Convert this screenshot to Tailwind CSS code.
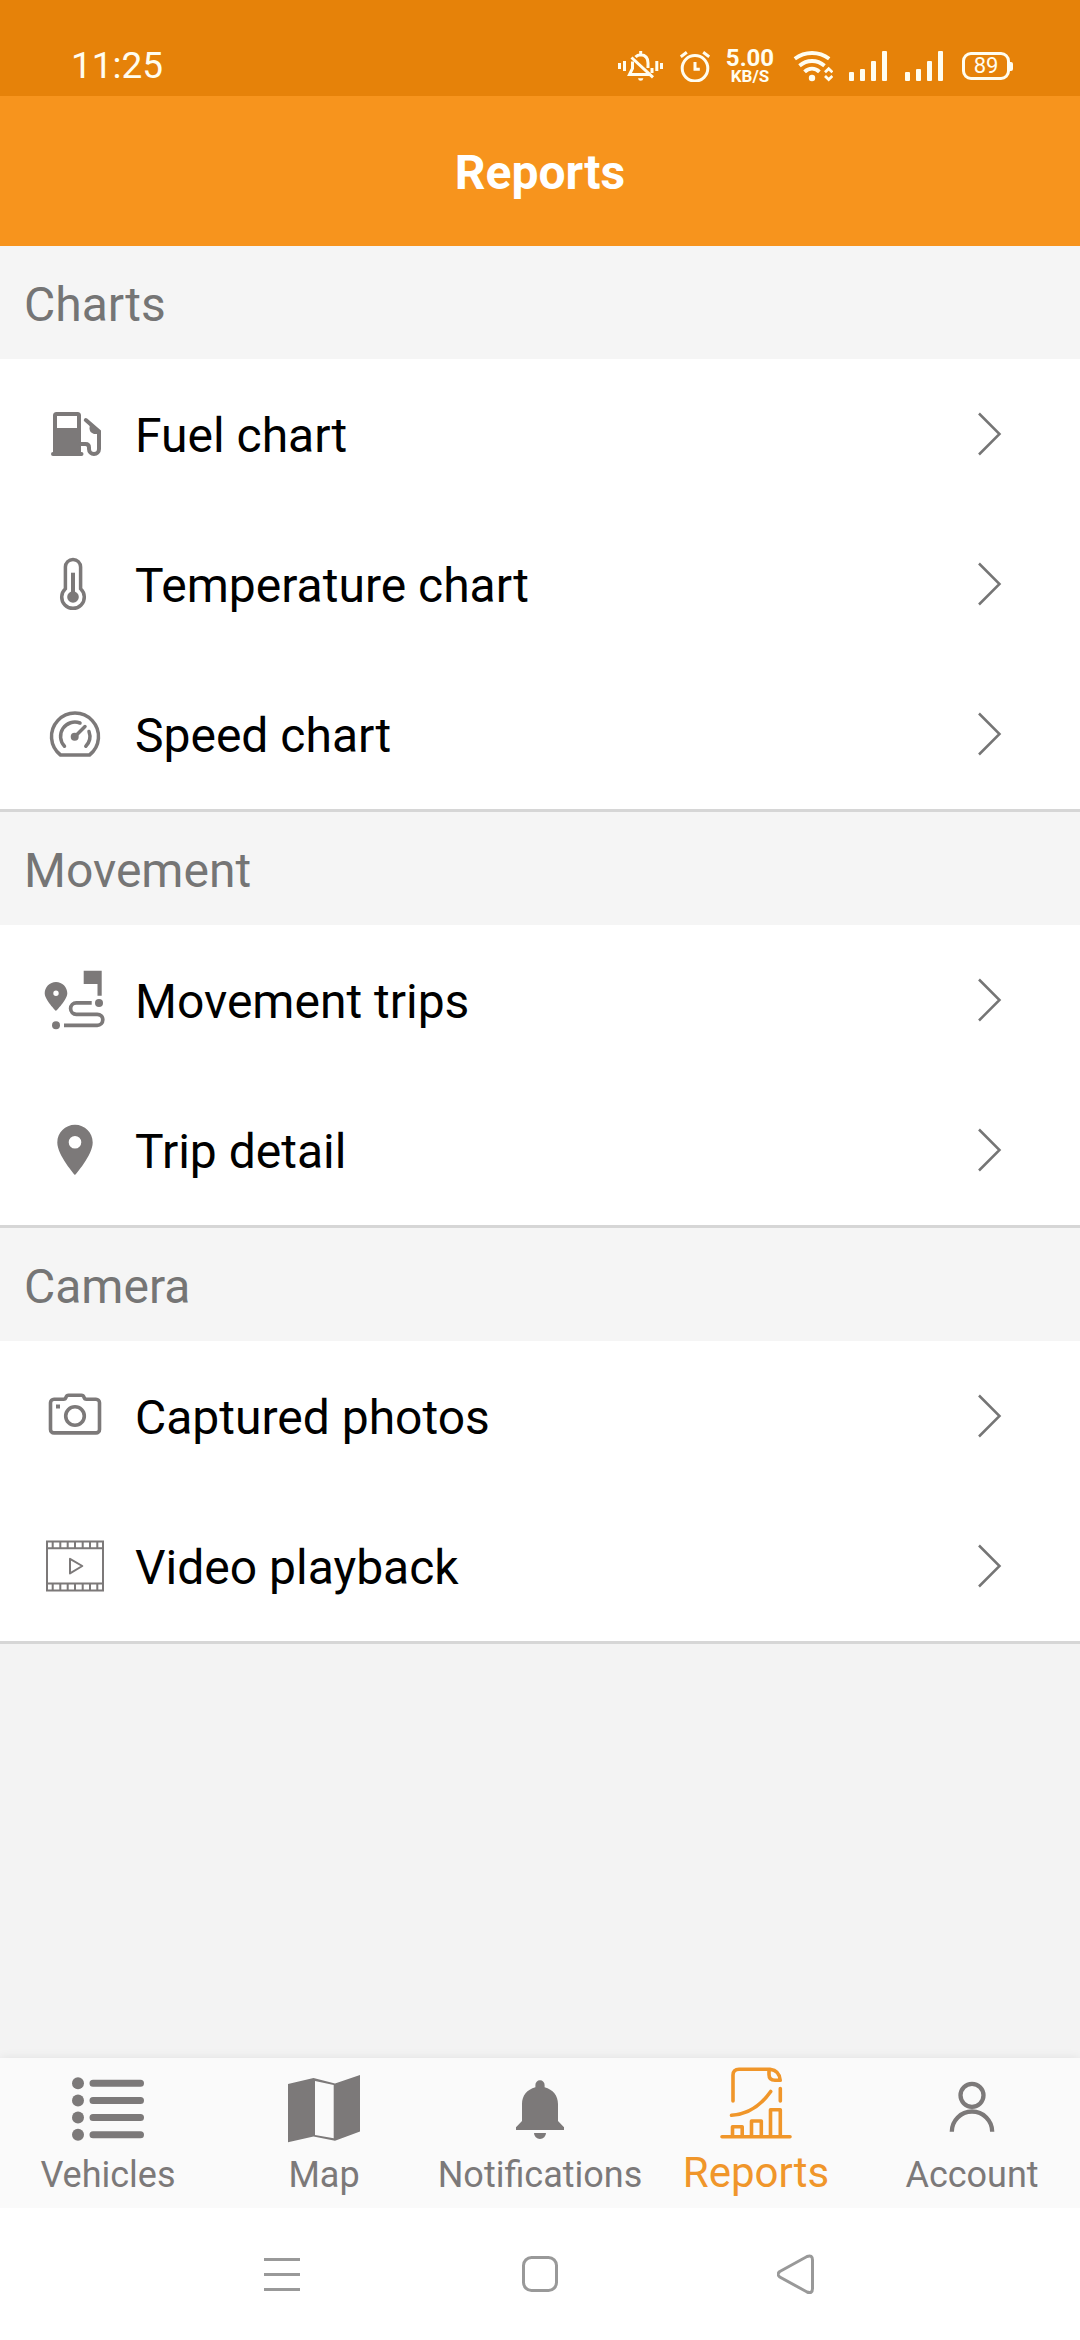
<!DOCTYPE html>
<html lang="en">
<head>
<meta charset="utf-8">
<meta name="viewport" content="width=device-width, initial-scale=1">
<title>Reports</title>
<script src="https://cdn.jsdelivr.net/npm/@tailwindcss/browser@4"></script>
</head>
<body class="flex min-h-screen flex-col bg-[#f3f3f3] font-[Roboto,sans-serif] text-black">

<!-- Status bar -->
<div class="flex h-24 shrink-0 items-center justify-between bg-[#e68209] pt-9 pr-[67px] pl-[71px] text-[#fffdf0]">
  <span class="text-[37px] leading-[48px]">11:25</span>
  <div class="flex items-center gap-4">
    <svg class="h-8 w-[46px]" viewBox="0 0 46 32" fill="none" stroke="currentColor" stroke-width="3" aria-label="Vibrate">
      <path d="M1.5 13v6M6.5 11v10M38.800 11v10M43.500 13v6"/>
      <path d="M13.500 7.500 35 27.300"/>
      <path d="M14.500 11.500v7l-3 6h20M17.500 7q2-2.300 5.200-2.300 7.300.500 7.300 8.300v5M22.700 1v4M34 18v5" />
      <path d="M20 28.300h5.400q-.400 2.500-2.700 2.500t-2.700-2.500z" fill="currentColor" stroke="none"/>
    </svg>
    <svg class="h-8 w-[30px]" viewBox="0 0 30 32" fill="none" stroke="currentColor" stroke-width="3" aria-label="Alarm">
      <circle cx="15" cy="18.300" r="12.800"/>
      <path d="M15 12v7.200h4.800M.800 6.800 6.800 2.300M29.200 6.800 23.200 2.300"/>
    </svg>
    <span class="flex w-12 flex-col items-center font-bold">
      <span class="text-2xl leading-5">5.00</span>
      <span class="text-[17px] leading-4">KB/S</span>
    </span>
    <svg class="h-8 w-[43px]" viewBox="0 0 43 32" fill="none" stroke="currentColor" stroke-width="3.800" aria-label="Wi-Fi">
      <path d="M4.800 8.800Q12.500 3 22 3t17.200 5.800M9.500 15.800Q15 11 22 11t12.500 4.800M14.600 21.800q3.200-3.200 7.400-3.200t7.400 3.200"/>
      <circle cx="22" cy="28" r="3.200" fill="currentColor" stroke="none"/>
      <path d="M35 22.300l3.700-3.500 3.700 3.500M35 26l3.700 3.500L42.400 26" stroke-width="2.800"/>
    </svg>
    <svg class="h-8 w-[38px]" viewBox="0 0 38 32" fill="currentColor" aria-label="Signal SIM 1">
      <rect y="22" width="5" height="9" rx="1"/><rect x="11" y="19" width="5" height="12" rx="1"/><rect x="22" y="11" width="5" height="20" rx="1"/><rect x="33" y="1" width="5" height="30" rx="1"/>
    </svg>
    <svg class="h-8 w-10" viewBox="-2 0 40 32" fill="currentColor" aria-label="Signal SIM 2">
      <rect y="22" width="5" height="9" rx="1"/><rect x="11" y="19" width="5" height="12" rx="1"/><rect x="22" y="11" width="5" height="20" rx="1"/><rect x="33" y="1" width="5" height="30" rx="1"/>
    </svg>
    <div class="flex items-center pl-[3px]">
      <span class="flex h-7 w-12 items-center justify-center rounded-[9px] border-3 border-current text-[22px] leading-none">89</span>
      <span class="h-[9px] w-[3px] rounded-r-[2px] bg-current"></span>
    </div>
  </div>
</div>

<header class="flex h-[150px] shrink-0 items-center justify-center bg-[#f7941d] pt-[3px]">
  <h1 class="text-5xl font-bold text-white">Reports</h1>
</header>

<main class="flex-1">
  <section class="border-b-3 border-[#d6d6d6] bg-white">
    <h2 class="flex h-[113px] items-center bg-[#f5f5f5] px-6 pt-1 text-5xl text-[#757575]">Charts</h2>
    <a href="#fuel" class="flex h-[150px] items-center gap-[30px] pr-[78px] pl-[45px]">
      <svg class="size-[60px] shrink-0 overflow-visible text-[#7c7979]" viewBox="0 0 60 60" fill="currentColor">
        <path fill-rule="evenodd" d="M11.500 8h21A3.500 3.500 0 0 1 36 11.500V48h.500a2 2 0 0 1 0 4H8a2 2 0 0 1 0-4V11.500A3.500 3.500 0 0 1 11.500 8zM12 12v12h20V12z"/>
        <path d="M35 40h5.500q3.500 0 3.500 3.500V45a5 5 0 0 0 10 0V27.500L40.800 16" fill="none" stroke="currentColor" stroke-width="4" stroke-linecap="round"/>
        <path d="M45 19l10 8v3h-6q-4.500-1.500-4.500-5.500z"/>
      </svg>
      <span class="flex-1 pt-[3px] text-5xl">Fuel chart</span>
      <svg class="h-11 w-6 shrink-0 text-[#757575]" viewBox="0 0 24 44" fill="none" stroke="currentColor" stroke-width="2.500"><path d="M1 1.500 21.500 22 1 42.500"/></svg>
    </a>
    <a href="#temperature" class="flex h-[150px] items-center gap-[30px] pr-[78px] pl-[45px]">
      <svg class="size-[60px] shrink-0 text-[#7c7979]" viewBox="0 0 60 60" fill="none" stroke="currentColor" stroke-width="3.500">
        <path d="M20.400 34.700V13a7.600 7.600 0 0 1 15.200 0V34.700A11.300 11.300 0 1 1 20.400 34.700z"/>
        <path d="M28 18.700V43" stroke-width="4"/>
        <circle cx="28" cy="43" r="5.800" fill="currentColor" stroke="none"/>
      </svg>
      <span class="flex-1 pt-[3px] text-5xl">Temperature chart</span>
      <svg class="h-11 w-6 shrink-0 text-[#757575]" viewBox="0 0 24 44" fill="none" stroke="currentColor" stroke-width="2.500"><path d="M1 1.500 21.500 22 1 42.500"/></svg>
    </a>
    <a href="#speed" class="flex h-[150px] items-center gap-[30px] pr-[78px] pl-[45px]">
      <svg class="size-[60px] shrink-0 text-[#7c7979]" viewBox="0 0 60 60" fill="none" stroke="currentColor" stroke-width="3.500" stroke-linecap="round" stroke-linejoin="round">
        <path d="M15.500 51A23.500 23.500 0 1 1 44.500 51z"/>
        <path d="M19.500 42.200A14.300 14.300 0 0 1 35 19M44 27.500A14.300 14.300 0 0 1 40.800 42.200M30 32.500 40 22.500"/>
        <circle cx="29.700" cy="32.700" r="4" fill="currentColor" stroke="none"/>
      </svg>
      <span class="flex-1 pt-[3px] text-5xl">Speed chart</span>
      <svg class="h-11 w-6 shrink-0 text-[#757575]" viewBox="0 0 24 44" fill="none" stroke="currentColor" stroke-width="2.500"><path d="M1 1.500 21.500 22 1 42.500"/></svg>
    </a>
  </section>

  <section class="border-b-3 border-[#d6d6d6] bg-white">
    <h2 class="flex h-[113px] items-center bg-[#f5f5f5] px-6 pt-1 text-5xl text-[#757575]">Movement</h2>
    <a href="#trips" class="flex h-[150px] items-center gap-[30px] pr-[78px] pl-[45px]">
      <svg class="size-[60px] shrink-0 overflow-visible text-[#7c7979]" viewBox="0 0 60 60" fill="currentColor">
        <path fill-rule="evenodd" d="M11 12C4.700 12-.300 17-.300 23.300-.300 30 11 41 11 41s11.300-11 11.300-17.700C22.300 17 17.300 12 11 12zm0 8.600a2.700 2.700 0 1 1 0 5.400 2.700 2.700 0 0 1 0-5.400z"/>
        <path d="M38.700.700h18v25h-4.200V14H38.700z"/>
        <circle cx="54" cy="33" r="4"/><circle cx="11" cy="55.300" r="4"/>
        <path d="M46.700 32.900H31.300a5.700 5.700 0 0 0 0 11.400h21a5.500 5.500 0 0 1 0 11H19" fill="none" stroke="currentColor" stroke-width="3.700"/>
      </svg>
      <span class="flex-1 pt-[3px] text-5xl">Movement trips</span>
      <svg class="h-11 w-6 shrink-0 text-[#757575]" viewBox="0 0 24 44" fill="none" stroke="currentColor" stroke-width="2.500"><path d="M1 1.500 21.500 22 1 42.500"/></svg>
    </a>
    <a href="#trip-detail" class="flex h-[150px] items-center gap-[30px] pr-[78px] pl-[45px]">
      <svg class="size-[60px] shrink-0 text-[#7c7979]" viewBox="0 0 60 60" fill="currentColor">
        <path fill-rule="evenodd" d="M30 4.700c-9.800 0-17.700 7.900-17.700 17.700C12.300 35 30 55 30 55s17.700-20 17.700-32.600C47.700 12.600 39.800 4.700 30 4.700zM30 16a6.300 6.300 0 1 1 0 12.600A6.300 6.300 0 0 1 30 16z"/>
      </svg>
      <span class="flex-1 pt-[3px] text-5xl">Trip detail</span>
      <svg class="h-11 w-6 shrink-0 text-[#757575]" viewBox="0 0 24 44" fill="none" stroke="currentColor" stroke-width="2.500"><path d="M1 1.500 21.500 22 1 42.500"/></svg>
    </a>
  </section>

  <section class="border-b-3 border-[#d6d6d6] bg-white">
    <h2 class="flex h-[113px] items-center bg-[#f5f5f5] px-6 pt-1 text-5xl text-[#757575]">Camera</h2>
    <a href="#photos" class="flex h-[150px] items-center gap-[30px] pr-[78px] pl-[45px]">
      <svg class="size-[60px] shrink-0 text-[#7c7979]" viewBox="0 0 60 60" fill="none" stroke="currentColor" stroke-width="3.600">
        <path d="M9 13.200h9.500q2 0 2.600-2.200.600-1.800 2.400-1.800h13q1.800 0 2.400 1.800.600 2.200 2.600 2.200H51a3.500 3.500 0 0 1 3.500 3.500v26.700a3.500 3.500 0 0 1-3.500 3.500H9a3.500 3.500 0 0 1-3.500-3.500V16.700A3.500 3.500 0 0 1 9 13.200z"/>
        <circle cx="30" cy="30" r="9.300"/>
        <path d="M11 18.500h4v4h-4z" fill="currentColor" stroke="none"/>
      </svg>
      <span class="flex-1 pt-[3px] text-5xl">Captured photos</span>
      <svg class="h-11 w-6 shrink-0 text-[#757575]" viewBox="0 0 24 44" fill="none" stroke="currentColor" stroke-width="2.500"><path d="M1 1.500 21.500 22 1 42.500"/></svg>
    </a>
    <a href="#video" class="flex h-[150px] items-center gap-[30px] pr-[78px] pl-[45px]">
      <svg class="size-[60px] shrink-0 text-[#7c7979]" viewBox="0 0 60 60" fill="none" stroke="currentColor" stroke-width="2">
        <path d="M2 5.500h56v49H2zM2 12.300h56M2 47.500h56"/>
        <path d="M7.700 5.500v7M15.300 5.500v7M22.700 5.500v7M30 5.500v7M37.700 5.500v7M45 5.500v7M52.300 5.500v7M7.700 47.500v7M15.300 47.500v7M22.700 47.500v7M30 47.500v7M37.700 47.500v7M45 47.500v7M52.300 47.500v7"/>
        <path d="M25 22.800v14.600L37.300 30z" stroke-linejoin="round"/>
      </svg>
      <span class="flex-1 pt-[3px] text-5xl">Video playback</span>
      <svg class="h-11 w-6 shrink-0 text-[#757575]" viewBox="0 0 24 44" fill="none" stroke="currentColor" stroke-width="2.500"><path d="M1 1.500 21.500 22 1 42.500"/></svg>
    </a>
  </section>
</main>

<!-- Tab bar -->
<nav class="grid h-[150px] shrink-0 grid-cols-5 bg-[#fafafa] text-4xl text-[#7c7979] shadow-[0_0_10px_rgba(0,0,0,0.08)]">
  <a href="#vehicles" class="flex flex-col items-center gap-[5px] pt-2">
    <svg class="h-20 w-[72px]" viewBox="0 0 72 80" fill="currentColor">
      <circle cx="6" cy="17.300" r="6"/><circle cx="6" cy="34.500" r="6"/><circle cx="6" cy="51.600" r="6"/><circle cx="6" cy="68.700" r="6"/>
      <path d="M21 17.300h47.500M21 34.500h47.500M21 51.600h47.500M21 68.700h47.500" stroke="currentColor" stroke-width="7" stroke-linecap="round"/>
    </svg>
    <span class="leading-[48px]">Vehicles</span>
  </a>
  <a href="#map" class="flex flex-col items-center gap-[5px] pt-2">
    <svg class="h-20 w-[72px]" viewBox="0 0 72 80" fill="currentColor">
      <path fill-rule="evenodd" d="M0 18l25.500-6 21.500 5.500L72 9v56.500l-25 9.300-21.500-4.300L0 76.300zM27 15v54l18.700 3.300V19z"/>
    </svg>
    <span class="leading-[48px]">Map</span>
  </a>
  <a href="#notifications" class="flex flex-col items-center gap-[5px] pt-2">
    <svg class="h-20 w-[72px]" viewBox="0 0 72 80" fill="currentColor">
      <path d="M36 14.300a4.500 4.500 0 0 1 4.600 4.700v2.200C49 23.500 54 29.500 54 38v17l6 6.300V64H12v-2.700L18 55V38c0-8.500 5-14.500 13.400-16.800V19a4.500 4.500 0 0 1 4.600-4.700zM30 67h12a6 6 0 0 1-12 0z"/>
    </svg>
    <span class="leading-[48px]">Notifications</span>
  </a>
  <a href="#reports" aria-current="page" class="flex flex-col items-center gap-[5px] pt-2 text-[#f0962a]">
    <svg class="h-20 w-[72px]" viewBox="0 0 72 80" fill="none" stroke="currentColor" stroke-width="3.600" stroke-linecap="round" stroke-linejoin="round">
      <path d="M13 35V9q0-5.700 6-5.700h31Q59.500 4.500 60.200 14.300H55Q49 14.300 49 8.500V4M60.300 22.500V35"/>
      <path d="M11.500 49.300Q35 48 50.700 25.500M2 70.700h68M12.500 70V60.700h9.700V70M31.500 70V55h9.800v15M50.500 70V43.700h9.800V70"/>
    </svg>
    <span class="text-[42px] leading-[44px]">Reports</span>
  </a>
  <a href="#account" class="flex flex-col items-center gap-[5px] pt-2">
    <svg class="h-20 w-[72px]" viewBox="0 0 72 80" fill="none" stroke="currentColor" stroke-width="4.300">
      <circle cx="36" cy="29.300" r="11.500"/><path d="M15.800 65.700a20.200 20.200 0 0 1 40.400 0"/>
    </svg>
    <span class="leading-[48px]">Account</span>
  </a>
</nav>

<!-- System navigation -->
<div class="flex h-[132px] shrink-0 items-center justify-center gap-[217px] bg-white text-[#999]">
  <button type="button" aria-label="Recent apps">
    <svg class="size-10" viewBox="0 0 40 40" fill="none" stroke="currentColor" stroke-width="3"><path d="M1 5.500h36M1 20.500h36M1 35.500h36"/></svg>
  </button>
  <button type="button" aria-label="Home">
    <svg class="size-10" viewBox="0 0 40 40" fill="none" stroke="currentColor" stroke-width="3"><rect x="3.500" y="3.500" width="33" height="33" rx="8"/></svg>
  </button>
  <button type="button" aria-label="Back">
    <svg class="size-10" viewBox="0 0 40 40" fill="none" stroke="currentColor" stroke-width="3"><path d="M2.800 17.500 30 2.500q5.500-2 5.500 3.500v28.500q0 5.500-5.500 3.500L2.800 23q-3.500-2.700 0-5.500z"/></svg>
  </button>
</div>
</body>
</html>
